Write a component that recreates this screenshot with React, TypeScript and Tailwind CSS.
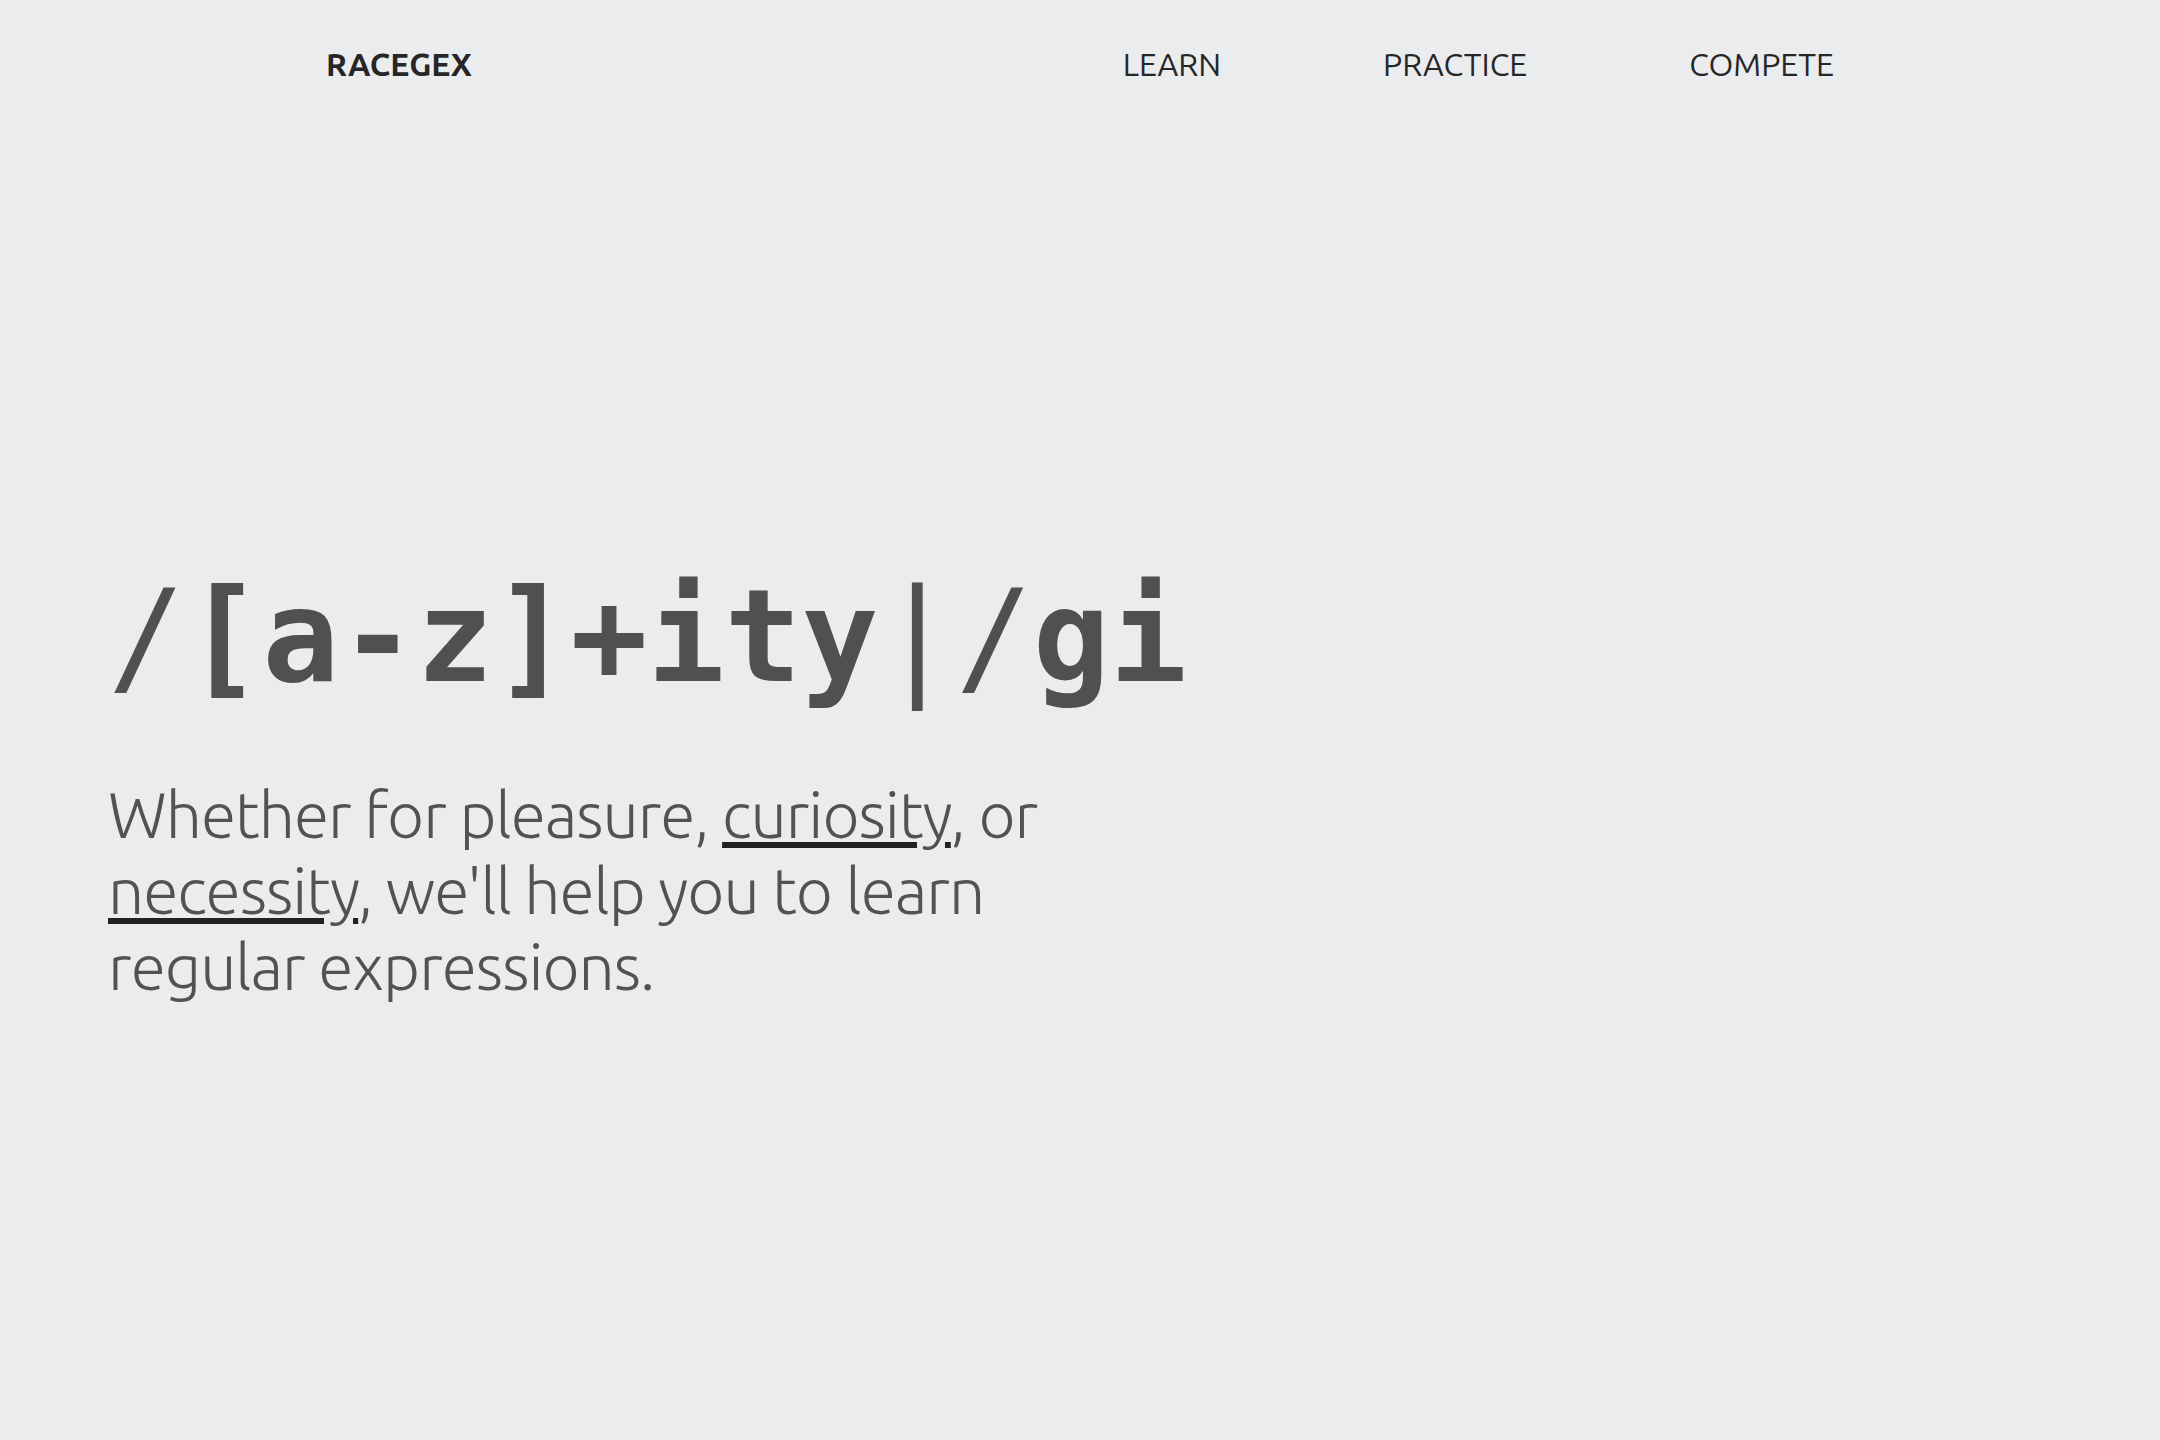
import React from 'react';

const sans = "font-['Ubuntu','Noto_Sans',sans-serif]";

const NavLink: React.FC<{ label: string }> = ({ label }) => (
    <a href="#" className="text-[32px] text-[#262626]">
        {label}
    </a>
);

export default function App() {
    return (
        <div className={`min-h-[1440px] w-full bg-[#ebecee] ${sans}`}>
            <header className="flex h-[128px] items-center justify-between px-[326px]">
                <a href="#" className="text-[32px] font-bold text-[#262626]">RACEGEX</a>
                <nav className="flex items-center gap-[162px]">
                    <NavLink label="LEARN" />
                    <NavLink label="PRACTICE" />
                    <NavLink label="COMPETE" />
                </nav>
            </header>

            <main className="px-[108px] pt-[445px]">
                <h1 className="font-['DejaVu_Sans_Mono',monospace] text-[128px] leading-none font-bold text-[#505050] whitespace-nowrap">
                    <span className="font-normal">/</span>[a-z]+ity<span className="font-normal">|</span><span className="font-normal">/</span>gi
                </h1>
                <p className="mt-[75px] max-w-[1000px] text-[64px] leading-[76px] font-light tracking-[-1px] text-[#525252]">
                    Whether for pleasure,{' '}
                    <span className="underline decoration-[#222222] decoration-[6px] underline-offset-[4px]">curiosity</span>, or{' '}
                    <span className="underline decoration-[#222222] decoration-[6px] underline-offset-[4px]">necessity</span>, we'll help you to learn regular expressions.
                </p>
            </main>
        </div>
    );
}
